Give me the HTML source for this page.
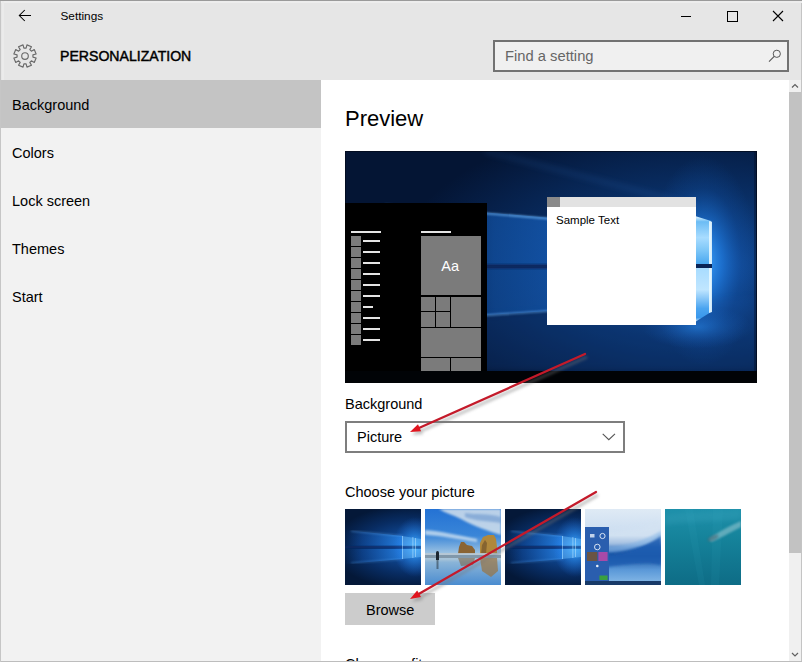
<!DOCTYPE html>
<html><head><meta charset="utf-8">
<style>
*{margin:0;padding:0;box-sizing:border-box}
html,body{width:802px;height:662px;overflow:hidden;background:#fff}
body{position:relative;font-family:"Liberation Sans",sans-serif;color:#000}
.abs{position:absolute}
#top{left:0;top:0;width:802px;height:80px;background:#e6e6e6}
#nav{left:0;top:80px;width:321px;height:582px;background:#f2f2f2}
#sel{left:0;top:80px;width:321px;height:48px;background:#c4c4c4}
.nv{position:absolute;left:12px;font-size:14.5px;line-height:16px;color:#000}
#content{left:321px;top:80px;width:468px;height:582px;background:#fff}
#sb{left:789px;top:80px;width:12px;height:582px;background:#f0f0f0}
#thumb{left:789px;top:92px;width:12px;height:461px;background:#c2c2c2}
.t{position:absolute;font-size:14.5px;line-height:16px;color:#000;white-space:nowrap}
</style></head><body>
<div id="top" class="abs"></div>
<!-- back arrow -->
<svg class="abs" style="left:0;top:0" width="40" height="30" viewBox="0 0 40 30"><path d="M19.3 15.5H31M24.8 10L19.3 15.5L24.8 21" fill="none" stroke="#000" stroke-width="1.05"/></svg>
<div class="t" style="left:60.5px;top:9px;font-size:11.8px;line-height:14px">Settings</div>
<!-- window controls -->
<div class="abs" style="left:681px;top:16px;width:10px;height:1px;background:#000"></div>
<div class="abs" style="left:726.5px;top:10.5px;width:11px;height:11px;border:1.2px solid #000"></div>
<svg class="abs" style="left:772px;top:10px" width="12" height="12" viewBox="0 0 12 12"><path d="M1 1L11 11M11 1L1 11" stroke="#000" stroke-width="1.1"/></svg>
<!-- gear -->
<svg class="abs" style="left:12.4px;top:43px" width="26" height="26" viewBox="0 0 26 26"><path d="M14.11 5.08L14.96 1.87L19.48 3.74L17.81 6.61L19.39 8.19L22.26 6.52L24.13 11.04L20.92 11.89L20.92 14.11L24.13 14.96L22.26 19.48L19.39 17.81L17.81 19.39L19.48 22.26L14.96 24.13L14.11 20.92L11.89 20.92L11.04 24.13L6.52 22.26L8.19 19.39L6.61 17.81L3.74 19.48L1.87 14.96L5.08 14.11L5.08 11.89L1.87 11.04L3.74 6.52L6.61 8.19L8.19 6.61L6.52 3.74L11.04 1.87L11.89 5.08Z" fill="none" stroke="#6a6a6a" stroke-width="1.15" stroke-linejoin="round"/><circle cx="13" cy="13" r="3.3" fill="none" stroke="#6a6a6a" stroke-width="1.15"/></svg>
<div class="t" style="left:60px;top:48px;font-size:14.1px;line-height:16px;-webkit-text-stroke:0.45px #000">PERSONALIZATION</div>
<!-- search -->
<div class="abs" style="left:493px;top:40px;width:296px;height:32px;border:2px solid #727272;background:#f0f0f0"></div>
<svg class="abs" style="left:766px;top:48px" width="16" height="16" viewBox="0 0 16 16"><circle cx="10.8" cy="5.8" r="3.6" fill="none" stroke="#555" stroke-width="1"/><path d="M8.2 8.4L3 13.6" stroke="#555" stroke-width="1.1"/></svg>
<div class="t" style="left:505px;top:48px;font-size:14.75px;color:#666">Find a setting</div>
<div id="nav" class="abs"></div>
<div id="sel" class="abs"></div>
<div class="nv" style="top:97px">Background</div>
<div class="nv" style="top:145px">Colors</div>
<div class="nv" style="top:193px">Lock screen</div>
<div class="nv" style="top:241px">Themes</div>
<div class="nv" style="top:289px">Start</div>
<div id="content" class="abs"></div>
<div class="t" style="left:345px;top:107px;font-size:22px;line-height:24px">Preview</div>
<svg class="abs" style="left:345px;top:151px" width="412" height="232" viewBox="0 0 412 232">
<defs>
<radialGradient id="pg" cx="0" cy="0" r="1" gradientUnits="userSpaceOnUse" gradientTransform="translate(350 116) scale(300 150)">
<stop offset="0" stop-color="#1656aa"/>
<stop offset="0.2" stop-color="#0f4288"/>
<stop offset="0.5" stop-color="#092e64"/>
<stop offset="0.8" stop-color="#061f48"/>
<stop offset="1" stop-color="#041534"/>
</radialGradient>
<radialGradient id="halo" cx="0" cy="0" r="1" gradientUnits="userSpaceOnUse" gradientTransform="translate(358 110) scale(55 105)">
<stop offset="0" stop-color="#40a8ff" stop-opacity="1"/>
<stop offset="0.35" stop-color="#2284ec" stop-opacity="0.6"/>
<stop offset="0.7" stop-color="#1460c0" stop-opacity="0.2"/>
<stop offset="1" stop-color="#1460c0" stop-opacity="0"/>
</radialGradient>
<radialGradient id="lowglow"><stop offset="0" stop-color="#2a8aec" stop-opacity="0.55"/><stop offset="0.6" stop-color="#2070d0" stop-opacity="0.2"/><stop offset="1" stop-color="#1860c0" stop-opacity="0"/></radialGradient>
<linearGradient id="bandg" x1="0" y1="0" x2="1" y2="0">
<stop offset="0" stop-color="#0c3b7c" stop-opacity="0"/>
<stop offset="0.35" stop-color="#1358b0" stop-opacity="0.75"/>
<stop offset="1" stop-color="#1e70d8" stop-opacity="1"/>
</linearGradient>
<linearGradient id="paneT" x1="0" y1="0" x2="0" y2="1">
<stop offset="0" stop-color="#e8f8ff"/>
<stop offset="0.12" stop-color="#6cbcf4"/>
<stop offset="0.45" stop-color="#a8dcff"/>
<stop offset="0.7" stop-color="#80c8f8"/>
<stop offset="1" stop-color="#4aa8f0"/>
</linearGradient>
<linearGradient id="paneB" x1="0" y1="0" x2="0" y2="1">
<stop offset="0" stop-color="#a8dcff"/>
<stop offset="0.4" stop-color="#c0e6ff"/>
<stop offset="0.75" stop-color="#4aa4f0"/>
<stop offset="0.92" stop-color="#3a98ec"/>
<stop offset="1" stop-color="#d8f2ff"/>
</linearGradient>
<filter id="b1" x="-20%" y="-20%" width="140%" height="140%"><feGaussianBlur stdDeviation="1.2"/></filter>
<filter id="b3" x="-50%" y="-50%" width="200%" height="200%"><feGaussianBlur stdDeviation="3"/></filter>
</defs>
<rect width="412" height="232" fill="url(#pg)"/>
<rect width="412" height="232" fill="url(#halo)"/>
<!-- light volume through logo -->
<polygon points="40,53 352,79 352,114 40,114" fill="url(#bandg)" opacity="0.85"/>
<polygon points="40,117 352,117 352,150 40,171" fill="url(#bandg)" opacity="0.75"/>
<polygon points="40,171 352,150 412,146 412,220 40,220" fill="#1450a0" opacity="0.2" filter="url(#b3)"/>
<ellipse cx="352" cy="176" rx="55" ry="22" fill="url(#lowglow)"/>
<rect x="40" y="113" width="312" height="5" fill="#082a62" opacity="0.85" filter="url(#b1)"/>
<!-- beams -->
<line x1="40" y1="54" x2="352" y2="80" stroke="#7cc0fa" stroke-width="1.7" opacity="0.8" filter="url(#b1)"/>
<line x1="40" y1="171" x2="352" y2="150" stroke="#6ab0f4" stroke-width="1.7" opacity="0.7" filter="url(#b1)"/>
<line x1="140" y1="0" x2="352" y2="55" stroke="#3b7ed0" stroke-width="2" opacity="0.35" filter="url(#b3)"/>
<!-- logo panes -->
<polygon points="350,65 366,70 366,113 350,113" fill="url(#paneT)"/>
<polygon points="350,117 366,117 366,161 350,171" fill="url(#paneB)"/>
<polygon points="364,70 367,70.8 367,161 364,162" fill="#e8f8ff" opacity="0.9"/>
<rect x="350" y="113" width="17" height="4" fill="#0a2456"/>
<rect x="0.5" y="0.5" width="411" height="231" fill="none" stroke="#020a1a" stroke-width="1" opacity="0.75"/>
<rect x="409" y="0" width="3" height="232" fill="#020a1a" opacity="0.35"/>
<!-- taskbar -->
<rect x="0" y="220" width="412" height="12" fill="#010306"/>
<!-- start menu -->
<rect x="0" y="52" width="142" height="168" fill="#000"/>
<g fill="#7b7b7b">
<rect x="6" y="85" width="10" height="10"/><rect x="6" y="96" width="10" height="10"/><rect x="6" y="107" width="10" height="10"/><rect x="6" y="118" width="10" height="10"/><rect x="6" y="129" width="10" height="10"/><rect x="6" y="140" width="10" height="10"/><rect x="6" y="151" width="10" height="10"/><rect x="6" y="162" width="10" height="10"/><rect x="6" y="173" width="10" height="10"/><rect x="6" y="184" width="10" height="10"/>
<rect x="76" y="85" width="60" height="59"/>
<rect x="76" y="146" width="14" height="14"/><rect x="91" y="146" width="14" height="14"/>
<rect x="76" y="161" width="14" height="15"/><rect x="91" y="161" width="14" height="15"/>
<rect x="106" y="146" width="30" height="30"/>
<rect x="76" y="177" width="60" height="29"/>
<rect x="76" y="207" width="29" height="13"/><rect x="106" y="207" width="30" height="13"/>
</g>
<g fill="#e4e4e4">
<rect x="6" y="80" width="30" height="2"/><rect x="76" y="80" width="30" height="2"/>
<rect x="18" y="89" width="17" height="2"/><rect x="18" y="100" width="17" height="2"/><rect x="18" y="111" width="17" height="2"/><rect x="18" y="122" width="17" height="2"/><rect x="18" y="133" width="17" height="2"/><rect x="18" y="144" width="17" height="2"/><rect x="18" y="155" width="10" height="2"/><rect x="18" y="166" width="17" height="2"/><rect x="18" y="177" width="17" height="2"/><rect x="18" y="188" width="17" height="2"/>
</g>
<text x="105.2" y="119.6" text-anchor="middle" font-family="Liberation Sans" font-size="14.5" fill="#fff">Aa</text>
<!-- sample window -->
<rect x="202" y="46" width="149" height="128" fill="#fff"/>
<rect x="202" y="46" width="149" height="10" fill="#e2e2e2"/>
<rect x="202" y="46" width="13" height="10" fill="#8a8a8a"/>
<text x="211" y="72.5" font-family="Liberation Sans" font-size="11.5" fill="#000">Sample Text</text>
</svg>

<div class="t" style="left:345px;top:396px">Background</div>
<div class="abs" style="left:345px;top:421px;width:280px;height:32px;border:2px solid #7e7e7e;background:#fff"></div>
<svg class="abs" style="left:600px;top:430px" width="18" height="12" viewBox="0 0 18 12"><path d="M2.7 3.8L8.8 9.7L15 3.8" fill="none" stroke="#555" stroke-width="1.1"/></svg>
<div class="t" style="left:357px;top:429px">Picture</div>
<div class="t" style="left:345px;top:484px">Choose your picture</div>
<!-- thumbnails -->
<svg class="abs" style="left:345px;top:509px" width="396" height="76" viewBox="0 0 396 76">
<defs>
<radialGradient id="hg" cx="0" cy="0" r="1" gradientUnits="userSpaceOnUse" gradientTransform="translate(66 38) scale(80 42)">
<stop offset="0" stop-color="#1a62c4"/>
<stop offset="0.3" stop-color="#0f4690"/>
<stop offset="0.65" stop-color="#082c62"/>
<stop offset="1" stop-color="#041838"/>
</radialGradient>
<radialGradient id="hh" cx="0" cy="0" r="1" gradientUnits="userSpaceOnUse" gradientTransform="translate(70 38) scale(22 30)">
<stop offset="0" stop-color="#40b0ff" stop-opacity="0.95"/>
<stop offset="0.5" stop-color="#2a8cf0" stop-opacity="0.5"/>
<stop offset="1" stop-color="#2070e0" stop-opacity="0"/>
</radialGradient>
<linearGradient id="hb" x1="0" y1="0" x2="1" y2="0">
<stop offset="0" stop-color="#1050a8" stop-opacity="0"/>
<stop offset="0.3" stop-color="#1458b4" stop-opacity="0.5"/>
<stop offset="1" stop-color="#2a8cf0" stop-opacity="0.9"/>
</linearGradient>
<filter id="tb1" x="-20%" y="-20%" width="140%" height="140%"><feGaussianBlur stdDeviation="0.8"/></filter>
<filter id="tb2" x="-30%" y="-30%" width="160%" height="160%"><feGaussianBlur stdDeviation="2"/></filter>
<linearGradient id="sky" x1="0" y1="0" x2="0" y2="1">
<stop offset="0" stop-color="#2472d4"/>
<stop offset="0.35" stop-color="#3a86d8"/>
<stop offset="0.58" stop-color="#9cc2e2"/>
<stop offset="0.66" stop-color="#a8c4d8"/>
<stop offset="0.7" stop-color="#8ab4d8"/>
<stop offset="1" stop-color="#4a8cd0"/>
</linearGradient>
<linearGradient id="sea" x1="0" y1="0" x2="0" y2="1">
<stop offset="0" stop-color="#1e90aa"/>
<stop offset="0.4" stop-color="#15829a"/>
<stop offset="1" stop-color="#0e6c86"/>
</linearGradient>
<linearGradient id="abs4" x1="0" y1="0" x2="0" y2="1">
<stop offset="0" stop-color="#dfeaf5"/>
<stop offset="0.35" stop-color="#c9dcf0"/>
<stop offset="0.5" stop-color="#2a68b8"/>
<stop offset="0.62" stop-color="#1a52a0"/>
<stop offset="0.8" stop-color="#5a98d8"/>
<stop offset="1" stop-color="#8abce8"/>
</linearGradient>
<clipPath id="c76"><rect width="76" height="76"/></clipPath>

</defs>
<g clip-path="url(#c76)">
<rect width="76" height="76" fill="url(#hg)"/>
<polygon points="0,21 58,27 58,37 0,37" fill="url(#hb)" opacity="0.85"/>
<polygon points="0,40 58,40 58,50 0,55" fill="url(#hb)" opacity="0.8"/>
<rect width="76" height="76" fill="url(#hh)"/>
<rect x="0" y="37" width="76" height="2.5" fill="#082a68" opacity="0.8" filter="url(#tb1)"/>
<line x1="6" y1="22" x2="58" y2="27" stroke="#70b8f8" stroke-width="0.9" opacity="0.6" filter="url(#tb1)"/>
<line x1="6" y1="54" x2="58" y2="50" stroke="#60acf4" stroke-width="0.9" opacity="0.55" filter="url(#tb1)"/>
<polygon points="57,27 76,30 76,37 57,37" fill="#6cc0ff" opacity="0.45"/>
<polygon points="57,40 76,40 76,48 57,50" fill="#6cc0ff" opacity="0.45"/>
<rect x="57" y="27" width="0.8" height="23" fill="#b8e4ff" opacity="0.6"/>
<rect x="67.5" y="28" width="0.8" height="21" fill="#c8ecff" opacity="0.6"/>
<rect x="70.2" y="29" width="0.8" height="19" fill="#c8ecff" opacity="0.6"/>
</g>
<g transform="translate(160 0)" clip-path="url(#c76)">
<rect width="76" height="76" fill="url(#hg)"/>
<polygon points="0,21 58,27 58,37 0,37" fill="url(#hb)" opacity="0.85"/>
<polygon points="0,40 58,40 58,50 0,55" fill="url(#hb)" opacity="0.8"/>
<rect width="76" height="76" fill="url(#hh)"/>
<rect x="0" y="37" width="76" height="2.5" fill="#082a68" opacity="0.8" filter="url(#tb1)"/>
<line x1="6" y1="22" x2="58" y2="27" stroke="#70b8f8" stroke-width="0.9" opacity="0.6" filter="url(#tb1)"/>
<line x1="6" y1="54" x2="58" y2="50" stroke="#60acf4" stroke-width="0.9" opacity="0.55" filter="url(#tb1)"/>
<polygon points="57,27 76,30 76,37 57,37" fill="#6cc0ff" opacity="0.45"/>
<polygon points="57,40 76,40 76,48 57,50" fill="#6cc0ff" opacity="0.45"/>
<rect x="57" y="27" width="0.8" height="23" fill="#b8e4ff" opacity="0.6"/>
<rect x="67.5" y="28" width="0.8" height="21" fill="#c8ecff" opacity="0.6"/>
<rect x="70.2" y="29" width="0.8" height="19" fill="#c8ecff" opacity="0.6"/>
</g>
<!-- beach -->
<g transform="translate(80 0)" clip-path="url(#c76)">
<rect width="76" height="76" fill="url(#sky)"/>
<path d="M14 0 L76 0 L76 26 C64 22 50 18 36 10 C28 6 20 4 14 0 Z" fill="#dfe8ee" opacity="0.8" filter="url(#tb1)"/>
<path d="M40 4 C52 6 62 4 76 8 L76 14 C62 12 50 12 40 8 Z" fill="#5a8ac8" opacity="0.5" filter="url(#tb1)"/>
<path d="M0 21 C16 22 32 26 52 30 L52 33 C32 30 16 27 0 26 Z" fill="#e0ecf4" opacity="0.7" filter="url(#tb1)"/>
<path d="M33 45 L34 38 L36 33 L39 33 L42 36 L47 37 L50 41 L50 45 Z" fill="#8a6434"/>
<path d="M55 45 L55 34 L58 28 L63 26 L69 26 L71 30 L72 38 L72 45 Z" fill="#b0883c"/>
<path d="M56 45 L57 36 L60 31 L62 34 L61 45 Z" fill="#6a4c28" opacity="0.6"/>
<rect x="0" y="44" width="76" height="2" fill="#b8c8d4" opacity="0.9"/>
<rect x="0" y="46" width="76" height="3" fill="#6a7c88" opacity="0.6"/>
<path d="M33 49 L50 49 L48 56 L36 57 Z" fill="#7a6040" opacity="0.55"/>
<path d="M55 49 L72 49 L73 62 L66 68 L57 62 Z" fill="#9a7440" opacity="0.7"/>
<rect x="11" y="44" width="3" height="7" fill="#1c2630"/>
<circle cx="12.5" cy="43.5" r="1.5" fill="#1c2630"/>
<rect x="11.5" y="51" width="2" height="9" fill="#2a3844" opacity="0.55"/>
</g>
<!-- abstract -->
<g transform="translate(240 0)" clip-path="url(#c76)">
<rect width="76" height="76" fill="url(#abs4)"/>
<path d="M0 20 C30 24 50 22 76 12 L76 30 C56 38 30 40 0 36 Z" fill="#d6e4f2" opacity="0.6" filter="url(#tb2)"/>
<path d="M0 44 C20 48 40 46 56 38 C64 34 70 30 76 26 L76 56 C60 52 40 56 20 58 L0 60 Z" fill="#1d5cb0" opacity="0.85" filter="url(#tb1)"/>
<path d="M10 36 C30 40 50 36 76 22 L76 28 C52 40 30 46 10 42 Z" fill="#8ab8e6" opacity="0.6" filter="url(#tb1)"/>
<rect x="0" y="18" width="24" height="54" fill="#2a5eae"/>
<rect x="5" y="25" width="4.5" height="3.5" fill="#e8f0fa" opacity="0.8"/>
<circle cx="17.5" cy="27" r="2.6" fill="none" stroke="#e8f0fa" stroke-width="0.9"/>
<circle cx="12.3" cy="38" r="2.8" fill="none" stroke="#e8f0fa" stroke-width="0.9"/>
<rect x="2" y="43" width="10.3" height="9" fill="#6a5444"/>
<rect x="13.4" y="43" width="9.2" height="9" fill="#a84aa8"/>
<circle cx="12.3" cy="57" r="1.3" fill="#e8f0fa"/>
<rect x="14.4" y="66.5" width="8.2" height="4.5" fill="#3aa040"/>
<rect x="0" y="72" width="76" height="4" fill="#183a68"/>
</g>
<!-- underwater -->
<g transform="translate(320 0)" clip-path="url(#c76)">
<rect width="76" height="76" fill="url(#sea)"/>
<path d="M20 0 L34 76 L40 76 L28 0 Z" fill="#40b0c8" opacity="0.08"/>
<path d="M48 0 L46 76 L54 76 L58 0 Z" fill="#40b0c8" opacity="0.08"/>
<path d="M0 6 C20 2 50 4 76 0 L76 10 C50 14 20 12 0 16 Z" fill="#40a8c0" opacity="0.25" filter="url(#tb2)"/>
<path d="M44 30 C52 24 62 18 76 12 L76 18 C64 24 54 30 46 33 Z" fill="#a8d0d8" opacity="0.5" filter="url(#tb1)"/>
<ellipse cx="48" cy="29" rx="6" ry="2.5" fill="#4a6a78" opacity="0.6" transform="rotate(-25 48 29)" filter="url(#tb1)"/>
</g>
</svg>

<div class="abs" style="left:345px;top:593px;width:90px;height:32px;background:#ccc"></div>
<div class="t" style="left:366px;top:602px">Browse</div>
<div id="sb" class="abs"></div>
<div id="thumb" class="abs"></div>
<svg class="abs" style="left:789px;top:80px" width="12" height="12" viewBox="0 0 12 12"><path d="M3 7.5L6 4.5L9 7.5" fill="none" stroke="#606060" stroke-width="1.2"/></svg>
<svg class="abs" style="left:789px;top:648px" width="12" height="12" viewBox="0 0 12 12"><path d="M3 5L6 8L9 5" fill="none" stroke="#606060" stroke-width="1.2"/></svg>
<div class="abs" style="left:801px;top:0;width:1px;height:662px;background:#c4c4c4"></div>
<div class="t" style="left:345px;top:656px">Choose a fit</div>
<div class="abs" style="left:0;top:661px;width:802px;height:1px;background:#bdbdbd"></div>
<div class="abs" style="left:0;top:0;width:802px;height:1px;background:#9a9a9a"></div>
<div class="abs" style="left:0;top:1px;width:1px;height:661px;background:#c6c6c6"></div>
<div class="abs" style="left:1px;top:1px;width:801px;height:2px;background:#ededed"></div>
<div class="abs" style="left:2px;top:1px;width:2px;height:79px;background:#ebebeb"></div>
<svg class="abs" style="left:0;top:0" width="802" height="662" viewBox="0 0 802 662">
<defs><filter id="shd" x="-10%" y="-10%" width="120%" height="120%"><feGaussianBlur stdDeviation="1.8"/></filter></defs>
<g opacity="0.45" filter="url(#shd)" transform="translate(2 3)">
<line x1="585" y1="354" x2="417.8" y2="428.5" stroke="#787878" stroke-width="3"/><polygon points="410.0,432.0 418.0,424.3 421.1,431.2" fill="#787878"/>
<line x1="596" y1="492" x2="417.4" y2="594.8" stroke="#787878" stroke-width="3"/><polygon points="410.0,599.0 417.2,590.5 421.0,597.1" fill="#787878"/>
</g>
<line x1="585" y1="354" x2="417.8" y2="428.5" stroke="#c41a2a" stroke-width="2.3" stroke-linecap="round"/><polygon points="410.0,432.0 418.0,424.3 421.1,431.2" fill="#e0141e"/>
<line x1="596" y1="492" x2="417.4" y2="594.8" stroke="#c41a2a" stroke-width="2.3" stroke-linecap="round"/><polygon points="410.0,599.0 417.2,590.5 421.0,597.1" fill="#e0141e"/>
</svg>
</body></html>
